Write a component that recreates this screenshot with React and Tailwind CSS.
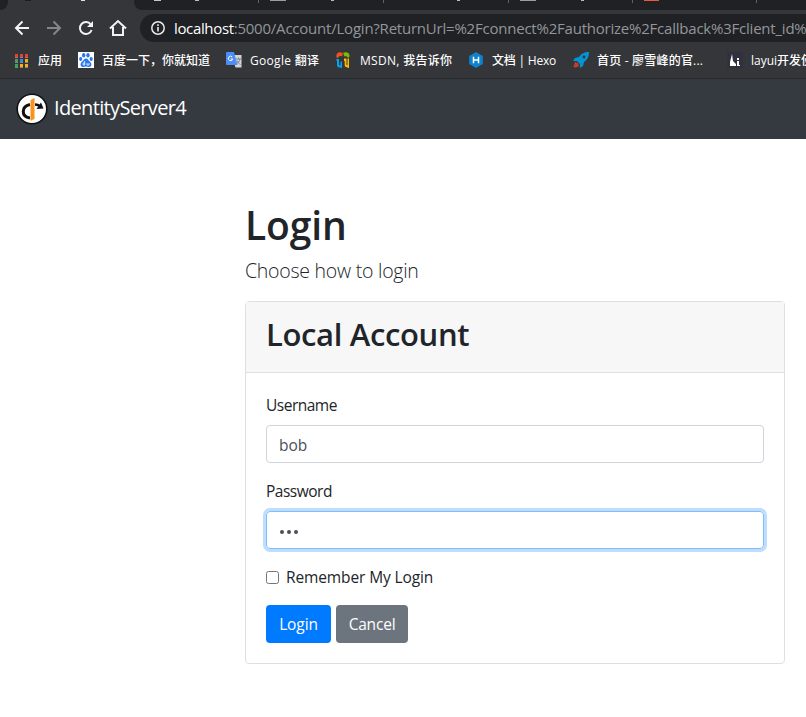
import React from "react";

const UI = "font-['Open_Sans','Noto_Sans_CJK_SC',sans-serif]";

function Nav() {
  return (
    <div className="flex h-7 items-center pl-[12px] bg-[#35363a]">
      <svg width="118" height="20" viewBox="12 18 118 20" fill="none" strokeWidth="2" className="shrink-0">
        <path d="M29 28H16.500M22.500 21.500L16 28L22.500 34.500" stroke="#f1f3f4" />
        <path d="M47 28H59.500M53.500 21.500L60 28L53.500 34.500" stroke="#84868a" />
        <path d="M90.800 24.500A6 6 0 1 0 91.600 30" stroke="#f1f3f4" />
        <path d="M93 21V27H87Z" fill="#f1f3f4" />
        <path d="M110 28.500L118 21L126 28.500M113 27V35H123V27" stroke="#f1f3f4" />
      </svg>
      <div className="ml-[10px] flex h-7 flex-1 items-center overflow-hidden rounded-l-full bg-[#202124] pl-[11px]">
        <svg width="14" height="14" viewBox="0 0 14 14" className="shrink-0" fill="none" stroke="#e8eaed" strokeWidth="1.5">
          <circle cx="7" cy="7" r="6.200" />
          <path d="M7 6V10.500M7 3.300V4.900" strokeWidth="1.600" />
        </svg>
        <div className="ml-[9px] flex whitespace-nowrap pb-px text-[15px] leading-7 text-[#92969b]">
          <span className="tracking-[-0.35px] text-white">localhost</span>
          <span className="tracking-[-0.22px]">:5000/Account/Login?ReturnUrl=%2Fconnect%2Fauthorize%2Fcallback%3Fclient_id%</span>
        </div>
      </div>
    </div>
  );
}

const dots = ["#f03a34", "#f03a34", "#f03a34", "#34a853", "#2b8cf0", "#fbb005", "#34a853", "#fbb005", "#fbb005"];

function Apps() {
  return (
    <div className="grid grid-cols-3 gap-x-[2px] gap-y-[2px]">
      {dots.map((c, i) => (
        <span key={i} className="h-[3px] w-[3px] shadow-[0_1px_0_#85868a]" style={{ backgroundColor: c }} />
      ))}
    </div>
  );
}

const Baidu = () => (
  <svg width="16" height="16" viewBox="0 0 16 16">
    <path fill="#fff" d="M0 0h16v16H0z" />
    <g fill="#2878e8">
      <ellipse cx="5.700" cy="3.300" rx="1.700" ry="2.200" />
      <ellipse cx="10" cy="3.300" rx="1.700" ry="2.200" />
      <ellipse cx="2.700" cy="7" rx="1.600" ry="2" />
      <ellipse cx="13.200" cy="7" rx="1.600" ry="2" />
      <path d="M8 6.500c2 0 2.500 2 4 3.300 2.500 2.200 1.400 5.200-1 5.200-1 0-2-.4-3-.4s-2 .4-3 .4c-2.400 0-3.500-3-1-5.200C5.500 8.500 6 6.500 8 6.500z" />
    </g>
    <path d="M6.700 9v4H5.200v-2h1.500M9 11v2h2v-2" fill="none" stroke="#fff" strokeWidth=".8" />
  </svg>
);

const Translate = () => (
  <svg width="16" height="16" viewBox="0 0 16 16">
    <path d="M6 3h9.500v12.500H9.500z" fill="#d3d6da" />
    <path d="M10 7h5M12.500 5.500V7M14 7c-.5 2-2 4-3.500 5M11 8.500c1 2 2 3 3.500 4" stroke="#7b8390" fill="none" />
    <path d="M1 0h7l3.500 13H1a1 1 0 0 1-1-1V1a1 1 0 0 1 1-1z" fill="#4e8df5" />
    <path d="M6.200 5A2.200 2.200 0 1 0 6.700 7H4.700" stroke="#fff" fill="none" />
  </svg>
);

const Msdn = () => (
  <svg width="16" height="16" viewBox="0 0 16 16">
    <path d="M.5 5.500C-.5 1 3-1 6.500 1v3.500C4.500 3.500 3 4 2 6z" fill="#f25022" />
    <path d="M7 .8c3-1.300 7-.5 6.500 3.700L12 6c-1-2-2-2-3.500-1.500z" fill="#7fba00" />
    <path d="M.5 7H3v5.500c0 1.500 1.500 1.300 1.500 0V9.500h1.500V16H4.500v-1C2.500 16 1 15 1 13V9H.500z" fill="#00a4ef" />
    <path d="M8 6.500h2.500v6c0 1 1 1 1 0V6.500H13V16h-1.500v-1C9.500 15.500 8.700 14.500 8.700 13V9H8z" fill="#ffb900" />
  </svg>
);

const Hexo = () => (
  <svg width="16" height="16" viewBox="0 0 16 16">
    <path d="M8 0l6.800 4v8L8 16l-6.800-4V4z" fill="#0e83cd" />
    <path d="M5.500 4.800v6.400M10.500 4.800v6.400M5.500 8h5" stroke="#fff" strokeWidth="1.500" />
  </svg>
);

const Rocket = () => (
  <svg width="16" height="16" viewBox="0 0 16 16">
    <path d="M16 0C11 0 8 2 6 5L2 6 0 9h4l3 3v4l3-2 1-4c3-2 5-5 5-10z" fill="#0593d3" />
    <circle cx="11" cy="5" r="1.400" fill="#35363a" />
    <path d="M1 15l2-5M2 15l4-2M3 13l2-2" stroke="#c8412c" strokeWidth="1.500" />
  </svg>
);

const Layui = () => (
  <svg width="16" height="16" viewBox="0 0 16 16">
    <rect width="16" height="16" rx="2" fill="#30313f" />
    <path d="M3 14V10L5 2l1 7 3 3v2zM10 6h2v2h-2zM10 9h2v4h1v1h-3z" fill="#fff" />
  </svg>
);

function Mark({ icon, width, gap, track, children }) {
  return (
    <div className={`flex shrink-0 items-center ${width}`}>
      <span className="flex shrink-0">{icon}</span>
      <span className={`whitespace-nowrap pt-[2px] ${gap} ${track}`}>{children}</span>
    </div>
  );
}

function Logo() {
  return (
    <svg width="32" height="32" viewBox="0 0 32 32" className="shrink-0">
      <circle cx="16" cy="16" r="14.800" fill="#fff" stroke="#111" strokeWidth="1.600" />
      <path d="M14 11.500C5 13.500 5 23.500 14 25" fill="none" stroke="#111" strokeWidth="3" />
      <path d="M19 11.500c2.500 0 4 .8 5.500 2" fill="none" stroke="#111" strokeWidth="2.500" />
      <path d="M20.500 16L27.500 15.500 25 9.500z" fill="#111" />
      <path d="M14.500 7L18.500 5v21l-4 1.800z" fill="#f7941d" />
    </svg>
  );
}

export default function App() {
  return (
    <div className={`h-[717px] w-[806px] overflow-hidden bg-white text-[#212529] ${UI}`}>
      <div className="flex h-[14px] flex-col bg-[#35363a]">
        <div className="flex h-[10px]">
          <div className="h-[10px] w-[8px] rounded-br-lg bg-[#202124]" />
          <div className="flex w-[126px]">
            <div className="ml-[17px] h-px w-[6px] bg-[#1f1a1e]" />
            <div className="ml-[50px] h-px w-[4px] bg-[#dfe3e8]" />
          </div>
          <div className="flex flex-1 rounded-bl-lg bg-[#202124]">
            <div className="ml-[20px] h-px w-[7px] bg-[#c4c6c8]" />
            <div className="ml-[34px] h-px w-[4px] bg-[#b9bcc0]" />
            <div className="ml-[59px] h-[3px] w-px bg-[#5f6368]" />
            <div className="ml-[11px] h-px w-[16px] bg-[#9a9c9f]" />
            <div className="ml-[45px] h-px w-[3px] bg-[#b9bcc0]" />
            <div className="ml-[49px] h-[3px] w-px bg-[#5f6368]" />
            <div className="ml-[73px] h-px w-[3px] bg-[#b9bcc0]" />
            <div className="ml-[48px] h-[3px] w-px bg-[#5f6368]" />
            <div className="ml-[11px] h-px w-[16px] bg-[#9a9c9f]" />
            <div className="ml-[45px] h-px w-[3px] bg-[#b9bcc0]" />
            <div className="ml-[48px] h-[3px] w-px bg-[#5f6368]" />
            <div className="ml-[11px] h-px w-[15px] bg-[#e8593f]" />
            <div className="ml-[97px] h-[3px] w-px bg-[#5f6368]" />
          </div>
        </div>
      </div>
      <Nav />
      <div className="flex h-[37px] items-center overflow-hidden border-b border-[#27282b] bg-[#35363a] pl-[15px] text-[12px] font-medium leading-5 text-white">
        <Mark icon={<Apps />} width="w-[63px]" gap="ml-[10px]" track="">应用</Mark>
        <Mark icon={<Baidu />} width="w-[148px]" gap="ml-[8px]" track="">百度一下，你就知道</Mark>
        <Mark icon={<Translate />} width="w-[110px]" gap="ml-[8px]" track="tracking-[0.3px]">Google 翻译</Mark>
        <Mark icon={<Msdn />} width="w-[132px]" gap="ml-[8px]" track="tracking-[0.3px]">MSDN, 我告诉你</Mark>
        <Mark icon={<Hexo />} width="w-[105px]" gap="ml-[8px]" track="tracking-[-0.2px]">文档 | Hexo</Mark>
        <Mark icon={<Rocket />} width="w-[154px]" gap="ml-[8px]" track="tracking-[0.2px]">首页 - 廖雪峰的官...</Mark>
        <Mark icon={<Layui />} width="w-[120px]" gap="ml-[8px]" track="">layui开发使</Mark>
      </div>
      <header className="flex h-[60px] items-center bg-[#343a40] pl-4 text-white">
        <Logo />
        <span className="ml-[6px] pb-[2px] text-[20px] tracking-[-0.65px]">IdentityServer4</span>
      </header>
      <main className="ml-[245px] w-[540px] pt-[62px]">
        <h1 className="h-[48px] text-[39px] font-semibold leading-[48px] tracking-[-0.1px]">Login</h1>
        <p className="mt-[7px] h-[30px] text-[19.5px] font-light leading-[30px] tracking-[-0.25px]">Choose how to login</p>
        <section className="mt-[15px] h-[363px] rounded border border-[#dfdfdf]">
          <div className="h-[71px] border-b border-[#dfdfdf] bg-[#f7f7f7] pl-5 pt-[13px]">
            <h2 className="text-[31px] font-semibold leading-[38px] tracking-[-0.35px]">Local Account</h2>
          </div>
          <form className="px-5 pt-5 text-[15.5px] leading-6" onSubmit={(e) => e.preventDefault()}>
            <label className="block tracking-[-0.5px]">Username</label>
            <input className="mt-2 block h-[38px] w-full rounded border border-[#ced4da] px-3 pt-[2px] text-[#495057] outline-none" defaultValue="bob" />
            <label className="mt-4 block tracking-[-0.5px]">Password</label>
            <div className="mt-2 flex h-[38px] items-center gap-[3px] rounded border border-[#80bdff] px-[13px] pt-[4px] shadow-[0_0_0_3px_#bfdeff]">
              <span className="h-[4px] w-[4px] rounded-full bg-[#495057]" />
              <span className="h-[4px] w-[4px] rounded-full bg-[#495057]" />
              <span className="h-[4px] w-[4px] rounded-full bg-[#495057]" />
            </div>
            <label className="mt-4 flex h-6 items-center tracking-[-0.12px]">
              <input type="checkbox" className="mr-[7px] h-[13px] w-[13px]" />
              Remember My Login
            </label>
            <div className="mt-4 flex gap-[5px] text-white">
              <button className="h-[38px] w-[65px] rounded bg-[#007bff] tracking-[-0.1px]">Login</button>
              <button className="h-[38px] w-[72px] rounded bg-[#6c757d] tracking-[-0.2px]">Cancel</button>
            </div>
          </form>
        </section>
      </main>
    </div>
  );
}
